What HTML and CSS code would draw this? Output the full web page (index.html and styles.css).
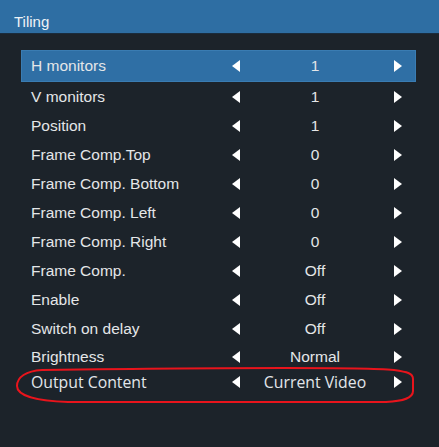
FILE: index.html
```html
<!DOCTYPE html>
<html>
<head>
<meta charset="utf-8">
<link rel="stylesheet" href="styles.css">
</head>
<body>
<div class="page">
  <div class="header">Tiling</div>
  <div class="menu">
    <div class="row active"><span class="label">H monitors</span><svg class="arr" viewBox="0 0 8 12"><path d="M8 0V12L0 6Z"/></svg><span class="val">1</span><svg class="arr" viewBox="0 0 8 12"><path d="M0 0V12L8 6Z"/></svg></div>
    <div class="row"><span class="label">V monitors</span><svg class="arr" viewBox="0 0 8 12"><path d="M8 0V12L0 6Z"/></svg><span class="val">1</span><svg class="arr" viewBox="0 0 8 12"><path d="M0 0V12L8 6Z"/></svg></div>
    <div class="row"><span class="label">Position</span><svg class="arr" viewBox="0 0 8 12"><path d="M8 0V12L0 6Z"/></svg><span class="val">1</span><svg class="arr" viewBox="0 0 8 12"><path d="M0 0V12L8 6Z"/></svg></div>
    <div class="row"><span class="label">Frame Comp.Top</span><svg class="arr" viewBox="0 0 8 12"><path d="M8 0V12L0 6Z"/></svg><span class="val">0</span><svg class="arr" viewBox="0 0 8 12"><path d="M0 0V12L8 6Z"/></svg></div>
    <div class="row"><span class="label">Frame Comp. Bottom</span><svg class="arr" viewBox="0 0 8 12"><path d="M8 0V12L0 6Z"/></svg><span class="val">0</span><svg class="arr" viewBox="0 0 8 12"><path d="M0 0V12L8 6Z"/></svg></div>
    <div class="row"><span class="label">Frame Comp. Left</span><svg class="arr" viewBox="0 0 8 12"><path d="M8 0V12L0 6Z"/></svg><span class="val">0</span><svg class="arr" viewBox="0 0 8 12"><path d="M0 0V12L8 6Z"/></svg></div>
    <div class="row"><span class="label">Frame Comp. Right</span><svg class="arr" viewBox="0 0 8 12"><path d="M8 0V12L0 6Z"/></svg><span class="val">0</span><svg class="arr" viewBox="0 0 8 12"><path d="M0 0V12L8 6Z"/></svg></div>
    <div class="row"><span class="label">Frame Comp.</span><svg class="arr" viewBox="0 0 8 12"><path d="M8 0V12L0 6Z"/></svg><span class="val">Off</span><svg class="arr" viewBox="0 0 8 12"><path d="M0 0V12L8 6Z"/></svg></div>
    <div class="row"><span class="label">Enable</span><svg class="arr" viewBox="0 0 8 12"><path d="M8 0V12L0 6Z"/></svg><span class="val">Off</span><svg class="arr" viewBox="0 0 8 12"><path d="M0 0V12L8 6Z"/></svg></div>
    <div class="row"><span class="label">Switch on delay</span><svg class="arr" viewBox="0 0 8 12"><path d="M8 0V12L0 6Z"/></svg><span class="val">Off</span><svg class="arr" viewBox="0 0 8 12"><path d="M0 0V12L8 6Z"/></svg></div>
    <div class="row short"><span class="label">Brightness</span><svg class="arr" viewBox="0 0 8 12"><path d="M8 0V12L0 6Z"/></svg><span class="val">Normal</span><svg class="arr" viewBox="0 0 8 12"><path d="M0 0V12L8 6Z"/></svg></div>
    <div class="row alt"><span class="label">Output Content</span><svg class="arr" viewBox="0 0 8 12"><path d="M8 0V12L0 6Z"/></svg><span class="val">Current Video</span><svg class="arr" viewBox="0 0 8 12"><path d="M0 0V12L8 6Z"/></svg></div>
  </div>
  <svg class="mark" viewBox="0 0 439 447" width="439" height="447">
    <path d="M42 370 C26 371 17 377 17 386 C17 396 38 401 68 402 L386 402 C404 401 413 398 413 391 L413 379 C413 373 407 372 394 370 C360 367 200 368 42 370 Z"/>
  </svg>
</div>
</body>
</html>
```
FILE: styles.css
```css
html, body {
  margin: 0;
  padding: 0;
  background: #1c232a;
}
.page {
  position: relative;
  width: 439px;
  height: 447px;
  background: #1c232a;
  font-family: "Liberation Sans", Arial, sans-serif;
  color: #e4e6e8;
  overflow: hidden;
}
.header {
  height: 34px;
  box-sizing: border-box;
  padding: 12px 0 0 14px;
  background: #2e6ea3;
  border-bottom: 1px solid #1a2c3d;
  font-size: 15px;
  line-height: 20px;
  color: #eef2f6;
}
.menu {
  margin: 16px 0 0 21px;
  width: 395px;
  display: flex;
  flex-direction: column;
}
.row {
  display: grid;
  grid-template-columns: 201px 8px 1fr 8px;
  align-items: center;
  height: 29px;
  padding: 0 14px 0 10px;
  font-size: 15.5px;
}
.row.active {
  height: 32px;
  box-sizing: border-box;
  background: #2f6fa5;
  border: 1px solid #3a7cb2;
  padding: 0 13px 0 9px;
}
.row.short {
  height: 28px;
}
.row.alt {
  height: 22px;
  font-family: "Open Sans", "Noto Sans", sans-serif;
  font-size: 15.8px;
  color: #e2e6ea;
}
.label {
  white-space: nowrap;
}
.val {
  text-align: center;
  padding-right: 4px;
  white-space: nowrap;
}
.arr {
  width: 8px;
  height: 12px;
  fill: #ffffff;
}
.mark {
  position: absolute;
  left: 0;
  top: 0;
  fill: none;
  stroke: #e8141c;
  stroke-width: 2;
}
```
